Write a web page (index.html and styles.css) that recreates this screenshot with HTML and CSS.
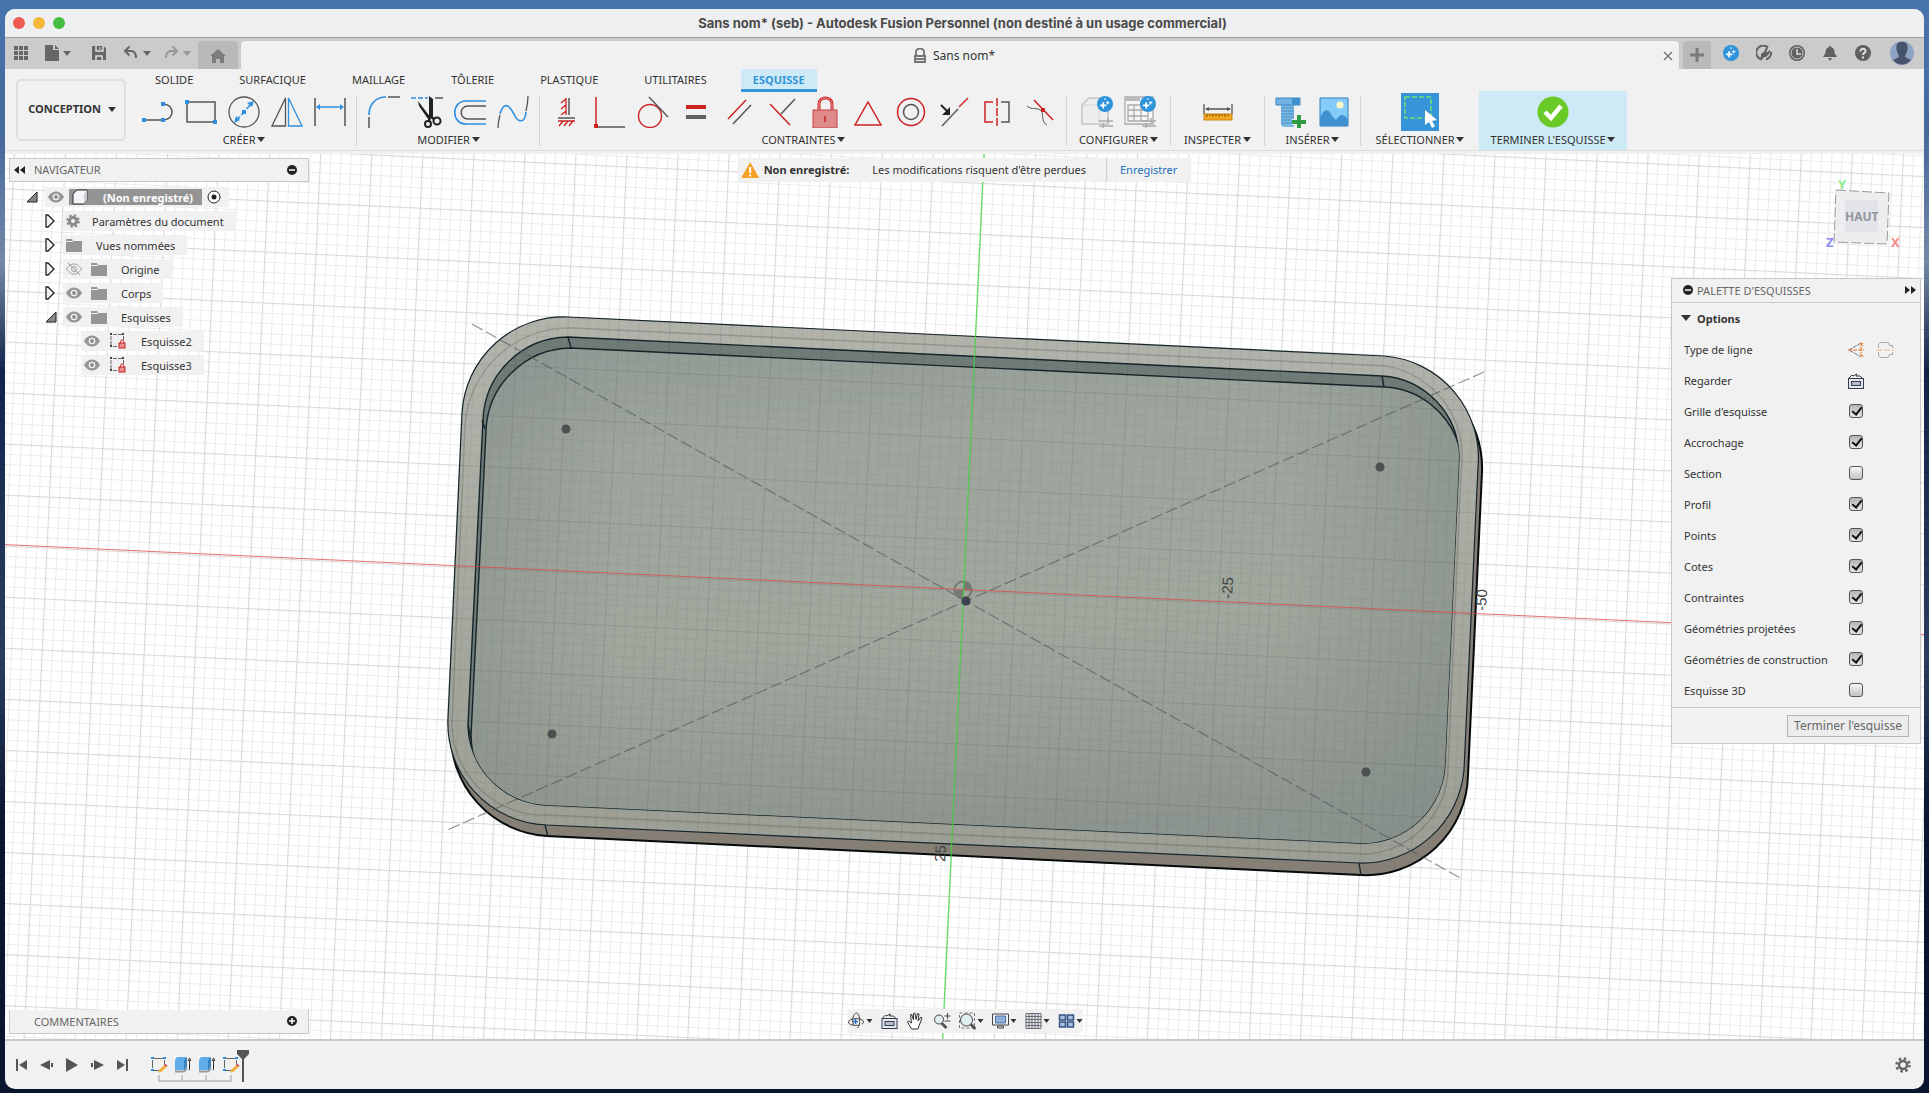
FILE: index.html
```html
<!DOCTYPE html>
<html lang="fr">
<head>
    <meta charset="UTF-8">
    <meta name="viewport" content="width=device-width, initial-scale=1.0">
    <title>Sans nom* - Autodesk Fusion</title>
    <link rel="stylesheet" href="styles.css">
</head>
<body>
    <!-- shared icons -->
    <svg class="symbols" width="0" height="0" aria-hidden="true">
        <symbol id="eye" viewBox="0 0 16 12">
            <path d="M0 6C3 1 6 .5 8 .5S13 1 16 6c-3 5-6 5.500-8 5.500S3 11 0 6z" fill="#969696"/>
            <circle cx="8" cy="6" r="3.300" fill="#f1f1f1"/>
            <circle cx="8" cy="6" r="1.900" fill="#8a8a8a"/>
        </symbol>
        <symbol id="eye-off" viewBox="0 0 16 12">
            <path d="M.5 6C4 1.500 6 1 8 1s4 .5 7.500 5c-3.500 4.500-5.500 5-7.500 5S4 10.500.5 6zM2 0l12 12" fill="none" stroke="#999"/>
            <circle cx="8" cy="6" r="2.500" fill="none" stroke="#999"/>
        </symbol>
        <symbol id="folder" viewBox="0 0 16 14">
            <path d="M0 1h6l1 2h9v11H0z" fill="#969696"/>
            <path d="M0 3.500h6.500l1-1" stroke="#f1f1f1" fill="none"/>
        </symbol>
        <symbol id="closed" viewBox="0 0 10 14">
            <path d="M1 1h2l6 6-6 6H1z" fill="#f1f1f1" stroke="#222" stroke-width="1.300"/>
        </symbol>
        <symbol id="open" viewBox="0 0 12 12">
            <path d="M11 1v10H1z" fill="#888" stroke="#222"/>
        </symbol>
        <symbol id="locked-sketch" viewBox="0 0 18 18">
            <path d="M2 4v9M4 2.500h9M14.500 4v5M4 14.500h5" fill="none" stroke="#666" stroke-dasharray="4 1"/>
            <path d="M1 1h2v2H1zM13 1h2v2h-2zM1 13h2v2H1z" fill="#444"/>
            <rect x="10" y="11" width="6" height="5" fill="#e89090" stroke="#c8201e"/>
            <path d="M11.500 11V9.500a1.500 1.500 0 0 1 3 0V11" fill="none" stroke="#c8201e"/>
        </symbol>
        <symbol id="sketch" viewBox="0 0 18 18">
            <path d="M2.500 4v8M4 2.500h9M14.500 4v5M4 14.500h5" fill="none" stroke="#666"/>
            <path d="M1 1h3v2H1zM13 1h3v2h-3zM1 13h3v2H1z" fill="#2f8fe0"/>
            <path d="M9 14l5-5 2.500 2-5 5-3 .7z" fill="#f3b13c"/>
            <path d="M14 9l1.500-1 2 2-1 1z" fill="#e43d3d"/>
        </symbol>
        <symbol id="extrude" viewBox="0 0 18 18">
            <path d="M1 15.500h9l3-3" fill="none" stroke="#999" stroke-width="2"/>
            <path d="M1 4l2-3h10v10l-3 3H1z" fill="#5face6"/>
            <path d="M10 4l3-3v10l-3 3z" fill="#3c84bd"/>
            <path d="M15.500 14V4M14 5l1.500-3L17 5" fill="none" stroke="#333"/>
        </symbol>
        <symbol id="look" viewBox="0 0 18 18">
            <rect x="1.500" y="6.500" width="15" height="10" fill="#e4e8f0" stroke="#333b4c"/>
            <rect x="4.500" y="9.500" width="9" height="4" fill="#b9bfcc" stroke="#333b4c"/>
            <path d="M2 6l3-3 1 1 4-2-1 2h4l2 2" fill="none" stroke="#333b4c"/>
        </symbol>
        <symbol id="spark" viewBox="0 0 18 18">
            <circle cx="9" cy="9" r="9" fill="#2f93dc"/>
            <path d="M7 7v7M3.500 10.500h7" stroke="#fff" stroke-width="2"/>
            <path d="M12 5.500v4M10 7.500h4M9 2.500v2" stroke="#fff" stroke-width="1.200"/>
        </symbol>
    </svg>

    <div class="window">
        <header class="titlebar">
            <div class="lights">
                <button class="light red" aria-label="Fermer"></button>
                <button class="light yellow" aria-label="Réduire"></button>
                <button class="light green" aria-label="Agrandir"></button>
            </div>
            <h1>Sans nom* (seb) - Autodesk Fusion Personnel (non destiné à un usage commercial)</h1>
        </header>

        <div class="tabbar">
            <div class="quick">
                <button aria-label="Données"><svg width="16" height="16"><path d="M1 1h4v4H1zM6 1h4v4H6zM11 1h4v4h-4zM1 6h4v4H1zM6 6h4v4H6zM11 6h4v4h-4zM1 11h4v4H1zM6 11h4v4H6zM11 11h4v4h-4z" fill="#666"/></svg></button>
                <button class="with-caret file" aria-label="Fichier"><svg width="14" height="16"><path d="M0 0h8v5h6v11H0z" fill="#666"/><path d="M10 0l4 4h-4z" fill="#666"/></svg><i class="caret"></i></button>
                <button aria-label="Enregistrer"><svg width="16" height="16"><path d="M1 1h11l3 2v12H1z" fill="#666"/><path d="M5 1v5h7V1M5 15v-4h6v4" fill="none" stroke="#ddd" stroke-width="1.500"/><path d="M9 2v3" stroke="#ddd"/></svg></button>
                <button class="with-caret undo" aria-label="Annuler"><svg width="16" height="16"><path d="M2 6h6c4 0 5 3 5 7M6.500 1.500L2 6l4.500 4.500" fill="none" stroke="#666" stroke-width="2"/></svg><i class="caret"></i></button>
                <button class="with-caret faded" aria-label="Rétablir"><svg width="16" height="16"><path d="M14 6H8c-4 0-5 3-5 7M9.500 1.500L14 6l-4.500 4.500" fill="none" stroke="#666" stroke-width="2"/></svg><i class="caret"></i></button>
            </div>
            <button class="home" aria-label="Accueil"><svg width="16" height="14"><path d="M8 0l8 7h-2v7h-4v-4H6v4H2V7H0z" fill="#7c7c7c"/></svg></button>
            <div class="doc-tab">
                <svg width="14" height="16"><path d="M3 7V4a4 3.500 0 0 1 8 0v3" fill="none" stroke="#777" stroke-width="2"/><path d="M1 7h12v8H1z" fill="#777"/><path d="M3 9.500h8M3 12.500h8" stroke="#eee"/></svg>
                <span>Sans nom*</span>
                <button class="close" aria-label="Fermer l'onglet"><svg width="10" height="10"><path d="M1 1l8 8M9 1L1 9" stroke="#777" stroke-width="1.500"/></svg></button>
            </div>
            <button class="plus" aria-label="Nouvel onglet"><svg width="14" height="14"><path d="M7 0v14M0 7h14" stroke="#7c7c7c" stroke-width="3"/></svg></button>
            <div class="account">
                <button aria-label="Nouveautés"><svg width="16" height="16"><use href="#spark"/></svg></button>
                <button aria-label="Extensions"><svg width="16" height="16"><path d="M6 14.500A7 7 0 1 1 12 2.500M15 7a7 7 0 0 1-5 7.500" fill="none" stroke="#606060" stroke-width="2"/><path d="M4 15c1-3 1-4 1-6l4-3 4 3-3 3c-2 0-4 1-4 3z" fill="#606060"/><path d="M9 7l2-4M11 9l3-3" stroke="#606060" stroke-width="2"/></svg></button>
                <button aria-label="Historique"><svg width="16" height="16"><circle cx="8" cy="8" r="8" fill="#606060"/><circle cx="8" cy="8" r="6" fill="none" stroke="#ccc"/><path d="M8 4v5h4" fill="none" stroke="#ddd" stroke-width="1.500"/></svg></button>
                <button aria-label="Notifications"><svg width="16" height="16"><path d="M8 0l1 2c3 1 3.500 3 3.500 6l2.500 4H1l2.500-4c0-3 .5-5 3.500-6zM6 13h4l-2 3z" fill="#606060"/></svg></button>
                <button aria-label="Aide"><svg width="16" height="16"><circle cx="8" cy="8" r="8" fill="#606060"/><path d="M5.500 6.500c0-4 5.500-3.500 5 0-.2 1.500-2.500 1.500-2.500 3.500M8 11.500v2" fill="none" stroke="#ddd" stroke-width="2"/></svg></button>
                <button class="avatar" aria-label="Compte"><svg width="24" height="24"><circle cx="12" cy="12" r="12" fill="#8fa3c4"/><path d="M12 1c5 0 6 3 5.500 7S15 14 15 16l6 3c-5 6-13 6-18 0l6-3c0-2-2-4-2.500-8S7 1 12 1z" fill="#46536a"/></svg></button>
            </div>
        </div>

        <div class="ribbon">
            <button class="workspace">CONCEPTION <i class="caret"></i></button>
            <div class="ribbon-main">
                <nav class="ribbon-tabs">
                    <a href="#">SOLIDE</a>
                    <a href="#">SURFACIQUE</a>
                    <a href="#">MAILLAGE</a>
                    <a href="#">TÔLERIE</a>
                    <a href="#">PLASTIQUE</a>
                    <a href="#">UTILITAIRES</a>
                    <a href="#" class="active">ESQUISSE</a>
                </nav>
                <div class="tools">
                    <section class="group">
                        <div class="icons">
                            <button aria-label="Ligne"><svg width="32" height="32"><path d="M3 24h16M21 8c12 0 12 16 0 16" fill="none" stroke="#555" stroke-width="1.500"/><path d="M0 22h4v4H0zM19 22h4v4h-4zM19 6h4v4h-4z" fill="#2f8fe0"/></svg></button>
                            <button aria-label="Rectangle"><svg width="32" height="32"><path d="M2 6h28v20H2z" fill="none" stroke="#555" stroke-width="1.500"/><path d="M0 4h4v4H0zM28 24h4v4h-4z" fill="#2f8fe0"/></svg></button>
                            <button aria-label="Cercle"><svg width="32" height="32"><circle cx="16" cy="16" r="15" fill="none" stroke="#555" stroke-width="1.300"/><path d="M8 25l16-18" stroke="#2f8fe0" stroke-width="1.500" stroke-dasharray="6 2"/><path d="M6 27l2-7 4 4zM26 5l-7 2 5 4zM14 14h4v4h-4z" fill="#2f8fe0"/></svg></button>
                            <button aria-label="Symétrie"><svg width="32" height="32"><path d="M14.500 2v28H1z" fill="none" stroke="#555" stroke-width="1.300"/><path d="M17.500 2v28H31z" fill="none" stroke="#2f8fe0" stroke-width="1.300"/></svg></button>
                            <button aria-label="Cote"><svg width="32" height="32"><path d="M1 2v28M31 2v28" stroke="#555" stroke-width="1.500"/><path d="M4 11h24" stroke="#2f8fe0" stroke-width="1.500"/><path d="M2 11l4-3v6zM30 11l-4-3v6z" fill="#2f8fe0"/></svg></button>
                        </div>
                        <h2>CRÉER <i class="caret"></i></h2>
                    </section>
                    <section class="group">
                        <div class="icons">
                            <button aria-label="Congé"><svg width="32" height="32"><path d="M1 19C1 8 8 1 18 1" fill="none" stroke="#2f8fe0" stroke-width="1.600"/><path d="M1 21v11M20 1h12" stroke="#555" stroke-width="1.500"/></svg></button>
                            <button aria-label="Ajuster"><svg width="32" height="32"><path d="M0 2h17" stroke="#2f8fe0" stroke-width="1.600" stroke-dasharray="5 2"/><path d="M24 2h8" stroke="#555" stroke-width="1.500"/><path d="M7 5l13 17-3 1L8 10zM18 0l4 3v18l-4-2z" fill="#222"/><circle cx="17" cy="28" r="3" fill="none" stroke="#222" stroke-width="2"/><circle cx="26" cy="25" r="3.500" fill="none" stroke="#222" stroke-width="2"/><path d="M18 19l5 4M19 20l-1 5" stroke="#222" stroke-width="2.500"/></svg></button>
                            <button aria-label="Décaler"><svg width="32" height="32"><path d="M32 5H12c-15 0-15 23 0 23h20" fill="none" stroke="#2f8fe0" stroke-width="1.700"/><path d="M32 10H14c-9 0-9 13 0 13h18" fill="none" stroke="#555" stroke-width="1.500"/></svg></button>
                            <button aria-label="Spline"><svg width="32" height="32"><path d="M3 18C8 1 15 14 18 20s10 8 11-4" fill="none" stroke="#2f8fe0" stroke-width="1.600"/><path d="M1 32c0-6 1-9 2-13M29 15c1-4 2-8 2-15" fill="none" stroke="#555" stroke-width="1.300"/></svg></button>
                        </div>
                        <h2>MODIFIER <i class="caret"></i></h2>
                    </section>
                    <section class="group">
                        <div class="icons">
                            <button aria-label="Horizontal/Vertical"><svg width="32" height="32"><path d="M18 2v17M7 22h17" stroke="#555" stroke-width="1.500"/><path d="M15 2v17M15 3l-5 4M15 9l-5 4M15 15l-5 4M7 25h17M12 25l-4 5M17 25l-4 5M22 25l-4 5" stroke="#cb2222" stroke-width="1.300"/></svg></button>
                            <button aria-label="Perpendiculaire"><svg width="32" height="32"><path d="M3 31h28" stroke="#555" stroke-width="1.500"/><path d="M2 1v28" stroke="#cb2222" stroke-width="1.500"/><path d="M0 28h4v4H0z" fill="#cb2222"/></svg></button>
                            <button aria-label="Tangent"><svg width="32" height="32"><circle cx="13" cy="20" r="11.500" fill="none" stroke="#cb2222" stroke-width="1.400"/><path d="M12 1l19 20" stroke="#555" stroke-width="1.400"/></svg></button>
                            <button aria-label="Égal"><svg width="32" height="32"><path d="M6 9h20v4H6z" fill="#cb2222"/><path d="M6 19h20v4H6z" fill="#606060"/></svg></button>
                            <button aria-label="Parallèle"><svg width="32" height="32"><path d="M5 23L23 4" stroke="#cb2222" stroke-width="1.500"/><path d="M10 28L28 9" stroke="#555" stroke-width="1.500"/></svg></button>
                            <button aria-label="Coïncident"><svg width="32" height="32"><path d="M4 8l20 21" stroke="#cb2222" stroke-width="1.500"/><path d="M15 18L29 3" stroke="#555" stroke-width="1.500"/></svg></button>
                            <button aria-label="Verrouiller"><svg width="32" height="32"><rect x="4" y="14" width="24" height="18" fill="#df8b8b" stroke="#c84040"/><path d="M10 14V8c0-8 13-8 13 0v6" fill="none" stroke="#cb2222" stroke-width="3"/><path d="M10 14V8c0-8 13-8 13 0v6" fill="none" stroke="#e9a0a0"/><path d="M16 20v6" stroke="#cb2222" stroke-width="1.500"/></svg></button>
                            <button aria-label="Milieu"><svg width="32" height="32"><path d="M16 6l13 23H3z" fill="none" stroke="#cb2222" stroke-width="1.500"/></svg></button>
                            <button aria-label="Concentrique"><svg width="32" height="32"><circle cx="16" cy="16" r="13.500" fill="none" stroke="#cb2222" stroke-width="1.500"/><circle cx="16" cy="16" r="7.500" fill="none" stroke="#555" stroke-width="1.500"/></svg></button>
                            <button aria-label="Colinéaire"><svg width="32" height="32"><path d="M4 30l16-17" stroke="#555" stroke-width="1.400"/><path d="M21 11l9-9" stroke="#cb2222" stroke-width="1.500"/><path d="M3 9l6 6" stroke="#222" stroke-width="2"/><path d="M12 11v8H4z" fill="#222"/></svg></button>
                            <button aria-label="Symétrique"><svg width="32" height="32"><path d="M16 2v28" stroke="#cb2222" stroke-width="1.500" stroke-dasharray="8 2"/><path d="M12 6H4v20h8" fill="none" stroke="#cb2222" stroke-width="1.500"/><path d="M20 6h8v20h-8" fill="none" stroke="#555" stroke-width="1.500"/></svg></button>
                            <button aria-label="Courbure"><svg width="32" height="32"><path d="M10 4l19 20" stroke="#cb2222" stroke-width="1.500"/><path d="M3 10c6 5 7 0 15 5 1 6 0 12 5 14" fill="none" stroke="#555"/><path d="M17 12h4v4h-4z" fill="#cb2222"/></svg></button>
                        </div>
                        <h2>CONTRAINTES <i class="caret"></i></h2>
                    </section>
                    <section class="group configure">
                        <div class="icons">
                            <button aria-label="Configurer"><svg width="32" height="32"><path d="M1 9l7-7h15l4 4v22H1z" fill="#eee" stroke="#c4c4c4" stroke-width="1.500"/><path d="M1 9h17v19" fill="none" stroke="#d4d4d4"/><path d="M18 25h14M18 30h14M27 22v5M22 27v5" stroke="#aaa" stroke-width="1.500"/><svg x="16" y="0" width="16" height="16"><use href="#spark"/></svg></svg></button>
                            <button aria-label="Table de configuration"><svg width="32" height="32"><path d="M1 1h28v27H1zM4 9h20v16H4zM4 14h20M4 20h20M10 9v16M17 9v16" fill="#f6f6f6" stroke="#aaa" stroke-width="1.300"/><path d="M2 2h14v3H2z" fill="#bbb"/><path d="M18 25h14M18 30h14M27 22v5M22 27v5" stroke="#aaa" stroke-width="1.500"/><svg x="16" y="0" width="16" height="16"><use href="#spark"/></svg></svg></button>
                        </div>
                        <h2>CONFIGURER <i class="caret"></i></h2>
                    </section>
                    <section class="group inspect">
                        <div class="icons">
                            <button aria-label="Mesurer"><svg width="32" height="32"><path d="M2 8v10M30 8v10M4 13h24" stroke="#555" stroke-width="1.300"/><path d="M3 13l4-2v4zM29 13l-4-2v4z" fill="#555"/><path d="M2 18h28v6H2z" fill="#f5a623" stroke="#c98314"/><path d="M5 18v3M8 18v2M11 18v3M14 18v2M17 18v3M20 18v2M23 18v3M26 18v2" stroke="#7a4d00"/></svg></button>
                        </div>
                        <h2>INSPECTER <i class="caret"></i></h2>
                    </section>
                    <section class="group insert">
                        <div class="icons">
                            <button aria-label="Insérer une fixation"><svg width="32" height="32"><path d="M6 9h13v22H8l-2-2z" fill="#7ab8e4"/><path d="M6 12h13M6 15h13M6 18h13M6 21h13M6 24h13M6 27h13" stroke="#4b92c6"/><path d="M1 2h24v7H1z" fill="#6fb3e6" stroke="#3c84bd"/><path d="M17 2h7v7h-7z" fill="#3f91cf"/><path d="M24 18v14M17 26h14" stroke="#f1f1f1" stroke-width="6"/><path d="M24 19v13M17 26h14" stroke="#2f9c43" stroke-width="4"/></svg></button>
                            <button aria-label="Insérer une image"><svg width="32" height="32"><path d="M2 2h28v28H2z" fill="#84cbf8" stroke="#2f7fc0"/><path d="M2 22c5-11 9-9 12-2l4 4c5-9 9-4 12-1v7H2z" fill="#3f91cf"/><circle cx="22" cy="9" r="3.500" fill="#fdf6c4"/></svg></button>
                        </div>
                        <h2>INSÉRER <i class="caret"></i></h2>
                    </section>
                    <section class="group select">
                        <div class="icons">
                            <button aria-label="Sélectionner"><svg class="big" width="38" height="38"><path d="M0 0h38v38H0z" fill="#3595d8"/><path d="M4 4h26v21H4z" fill="none" stroke="#6fe07a" stroke-width="1.500" stroke-dasharray="5 2"/><path d="M24 17v15l4-3 3 6 3-2-3-5 5-1z" fill="#fff"/></svg></button>
                        </div>
                        <h2>SÉLECTIONNER <i class="caret"></i></h2>
                    </section>
                    <button class="finish">
                        <svg width="32" height="32"><circle cx="16" cy="16" r="15.500" fill="#69ca27"/><path d="M8 16l6 6 10-12" fill="none" stroke="#fff" stroke-width="4.500"/></svg>
                        <span>TERMINER L'ESQUISSE <i class="caret"></i></span>
                    </button>
                </div>
            </div>
        </div>

        <main class="canvas">
            <svg class="scene" viewBox="5 154 1919 885" preserveAspectRatio="xMidYMid slice">
                <defs>
                    <pattern id="minor" width="10.200" height="10.200" patternUnits="userSpaceOnUse" patternTransform="translate(963.500 590.500) rotate(2.680)">
                        <path d="M0 0H10.200M0 0V10.200" stroke="#000" stroke-opacity=".08" stroke-width="2"/>
                    </pattern>
                    <pattern id="major" width="51" height="51" patternUnits="userSpaceOnUse" patternTransform="translate(963.500 590.500) rotate(2.680)">
                        <path d="M0 0H51M0 0V51" stroke="#000" stroke-opacity=".08" stroke-width="2.400"/>
                    </pattern>
                    <linearGradient id="rimFill" x1="0" y1="0" x2="0" y2="1">
                        <stop offset="0" stop-color="#b2b4ac"/>
                        <stop offset="1" stop-color="#9c9f95"/>
                    </linearGradient>
                    <linearGradient id="floorFill" x1="0" y1="0" x2=".12" y2="1">
                        <stop offset="0" stop-color="#929b96"/>
                        <stop offset=".22" stop-color="#9ea69d"/>
                        <stop offset=".6" stop-color="#a0a79d"/>
                        <stop offset=".8" stop-color="#989f96"/>
                        <stop offset="1" stop-color="#8d958f"/>
                    </linearGradient>
                    <linearGradient id="floorSides">
                        <stop offset="0" stop-color="#7f8a86" stop-opacity=".4"/>
                        <stop offset=".15" stop-color="#7f8a86" stop-opacity="0"/>
                        <stop offset=".82" stop-color="#7f8a86" stop-opacity="0"/>
                        <stop offset="1" stop-color="#7f8a86" stop-opacity=".5"/>
                    </linearGradient>
                    <path id="opening" d="M568 337L1382 376A82 82 0 0 1 1459 457L1445 762A82 82 0 0 1 1359 843L546 805A82 82 0 0 1 468 725L483 420A86 86 0 0 1 568 337z"/>
                    <path id="rim" d="M569 317L1384 356A102 102 0 0 1 1478 467L1464 770A102 102 0 0 1 1359 863L546 825A102 102 0 0 1 448 718L462 413A102 102 0 0 1 569 317z"/>
                    <clipPath id="openingClip"><use href="#opening"/></clipPath>
                    <clipPath id="rimClip"><use href="#rim"/></clipPath>
                </defs>
                <path d="M5 154h1919v885H5z" fill="#fff"/>
                <path d="M5 154h1919v885H5z" fill="url(#minor)"/>
                <path d="M5 154h1919v885H5z" fill="url(#major)"/>

                <!-- tray -->
                <path d="M569 330L1386 366A102 102 0 0 1 1482 472L1468 775A102 102 0 0 1 1361 875L547 836A102 102 0 0 1 451 730L466 430z" fill="#857f75" stroke="#050a0c" stroke-width="2"/>
                <use href="#rim" fill="url(#rimFill)" stroke="#16262c" stroke-width="1.200"/>
                <use href="#opening" fill="#717c79" stroke="#16262c" stroke-width="1.400"/>
                <g clip-path="url(#openingClip)">
                    <use href="#opening" transform="translate(3 11)" fill="url(#floorFill)"/>
                    <use href="#opening" transform="translate(3 11)" fill="url(#floorSides)" stroke="#16262c" stroke-width="1.400"/>
                </g>
                <path d="M568 337l3 11M1382 376l2 11M545 825l3 12M1359 863l2 12M482 420l3 9M468 725l3 14" stroke="#16262c" stroke-width="1.400"/>
                <path d="M571 328L1386 366A92 92 0 0 1 1461 472L1448 770A88 88 0 0 1 1366 854L549 815A92 92 0 0 1 452 724L465 425A104 104 0 0 1 571 328z" fill="none" stroke="#000" stroke-opacity=".15" stroke-width="1.500"/>
                <g clip-path="url(#rimClip)" opacity=".6">
                    <path d="M5 154h1919v885H5z" fill="url(#minor)"/>
                    <path d="M5 154h1919v885H5z" fill="url(#major)"/>
                </g>

                <!-- sketch geometry and axes -->
                <path d="M472 324L966 601L1462 879M1484 372L966 601L445 831" fill="none" stroke="#4a5252" stroke-opacity=".6" stroke-width="1.200" stroke-dasharray="12 4"/>
                <circle cx="963" cy="590" r="8.500" fill="none" stroke="#767a72" stroke-width="2"/>
                <path d="M963 590v-8.500a8.500 8.500 0 0 1 8.500 8.500zM963 590v8.500a8.500 8.500 0 0 1-8.500-8.500z" fill="#767a72"/>
                <path d="M5 544.600L1924 634.500" stroke="#d44" stroke-opacity=".75"/>
                <path d="M984 154L942.500 1039" stroke="#3ddc3d" stroke-opacity=".8" stroke-width="1.200"/>
                <g fill="#4a5150">
                    <circle cx="566" cy="429" r="4.500"/>
                    <circle cx="1380" cy="467" r="4.500"/>
                    <circle cx="552" cy="734" r="4.500"/>
                    <circle cx="1366" cy="772" r="4.500"/>
                    <circle cx="966" cy="601" r="4.500" fill="#3c4250"/>
                </g>
                <g class="ticks">
                    <text transform="translate(1232 599) rotate(-87)">-25</text>
                    <text transform="translate(1486 611) rotate(-87)">-50</text>
                    <text transform="translate(945 862) rotate(-87)">25</text>
                </g>
            </svg>

            <section class="browser">
                <header class="panel-head">
                    <svg width="11" height="8"><path d="M5 0v8L0 4zM11 0v8L6 4z" fill="#222"/></svg>
                    <h2>NAVIGATEUR</h2>
                    <button aria-label="Masquer"><svg width="10" height="10"><circle cx="5" cy="5" r="5" fill="#222"/><path d="M2 5h6" stroke="#fff" stroke-width="1.500"/></svg></button>
                </header>
                <ul class="tree">
                    <li class="root">
                        <svg width="12" height="12"><use href="#open"/></svg>
                        <div class="node">
                            <svg width="16" height="12"><use href="#eye"/></svg>
                            <span class="selected">
                                <svg width="18" height="16"><path d="M2 5l4-4h10v10l-3 4H2z" fill="#f4f5f8" stroke="#333"/><path d="M13 5l3-4v10l-3 4z" fill="#c9ccd6"/></svg>
                                (Non enregistré)
                            </span>
                            <svg width="14" height="14"><circle cx="7" cy="7" r="6" fill="#fff" stroke="#222"/><circle cx="7" cy="7" r="2.500" fill="#222"/></svg>
                        </div>
                    </li>
                    <li>
                        <svg width="10" height="14"><use href="#closed"/></svg>
                        <div class="node params">
                            <svg width="14" height="14"><circle cx="7" cy="7" r="3.500" fill="none" stroke="#8c8c8c" stroke-width="3"/><circle cx="7" cy="7" r="5.500" fill="none" stroke="#8c8c8c" stroke-width="2.500" stroke-dasharray="2.300 2.020"/></svg>
                            Paramètres du document
                        </div>
                    </li>
                    <li>
                        <svg width="10" height="14"><use href="#closed"/></svg>
                        <div class="node views"><svg width="16" height="14"><use href="#folder"/></svg>Vues nommées</div>
                    </li>
                    <li>
                        <svg width="10" height="14"><use href="#closed"/></svg>
                        <div class="node"><svg width="16" height="12"><use href="#eye-off"/></svg><svg width="16" height="14"><use href="#folder"/></svg><span>Origine</span></div>
                    </li>
                    <li>
                        <svg width="10" height="14"><use href="#closed"/></svg>
                        <div class="node"><svg width="16" height="12"><use href="#eye"/></svg><svg width="16" height="14"><use href="#folder"/></svg><span>Corps</span></div>
                    </li>
                    <li class="expanded">
                        <svg width="12" height="12"><use href="#open"/></svg>
                        <div class="node"><svg width="16" height="12"><use href="#eye"/></svg><svg width="16" height="14"><use href="#folder"/></svg><span>Esquisses</span></div>
                    </li>
                    <li class="leaf">
                        <div class="node"><svg width="16" height="12"><use href="#eye"/></svg><svg width="18" height="18"><use href="#locked-sketch"/></svg><span>Esquisse2</span></div>
                    </li>
                    <li class="leaf">
                        <div class="node"><svg width="16" height="12"><use href="#eye"/></svg><svg width="18" height="18"><use href="#locked-sketch"/></svg><span>Esquisse3</span></div>
                    </li>
                </ul>
            </section>

            <div class="notice">
                <svg width="18" height="16"><path d="M9 0l9 16H0z" fill="#f5a027"/><path d="M9 5v6M9 12.500v2" stroke="#fff" stroke-width="2"/></svg>
                <strong>Non enregistré:</strong>
                <span>Les modifications risquent d'être perdues</span>
                <a href="#">Enregistrer</a>
            </div>

            <svg class="viewcube" width="84" height="85">
                <path d="M16 20l53 3-2 51-53-2z" fill="#ececee" fill-opacity=".9" stroke="#9a9a9a" stroke-dasharray="10 3"/>
                <path d="M25 30h33v32H25z" fill="#e2e4ea"/>
                <text class="face" x="25" y="51">HAUT</text>
                <text x="18" y="19" fill="#8cee8c">Y</text>
                <text x="6" y="77" fill="#8a8af5">Z</text>
                <text x="71" y="77" fill="#f38c8c">X</text>
            </svg>

            <section class="palette">
                <header class="panel-head">
                    <svg width="10" height="10"><circle cx="5" cy="5" r="5" fill="#222"/><path d="M2 5h6" stroke="#fff" stroke-width="1.500"/></svg>
                    <h2>PALETTE D'ESQUISSES</h2>
                    <button aria-label="Ancrer"><svg width="11" height="8"><path d="M0 0v8l5-4zM6 0v8l5-4z" fill="#222"/></svg></button>
                </header>
                <h3><i class="caret"></i>Options</h3>
                <div class="option">
                    <span>Type de ligne</span>
                    <button aria-label="Construction"><svg width="18" height="16"><path d="M14 1L2 8l12 7" fill="none" stroke="#777" stroke-dasharray="4 1"/><path d="M1 8h16M13 1l3 3M16 1l-4 3M13 12l4 3M14 5v6" stroke="#e8752a" stroke-width="1.200" stroke-dasharray="4 1"/></svg></button>
                    <button class="second" aria-label="Axe"><svg width="18" height="16"><path d="M2.500 6V3l2-2.500h8l1 3h3V6M2.500 10v3l2 2.500h8l1-3h3V10" fill="none" stroke="#aaa"/><path d="M0 8h18" stroke="#f3b48e" stroke-dasharray="6 2"/></svg></button>
                </div>
                <div class="option">
                    <span>Regarder</span>
                    <button aria-label="Regarder"><svg width="18" height="18"><use href="#look"/></svg></button>
                </div>
                <div class="option"><label for="grid">Grille d'esquisse</label><input type="checkbox" id="grid" checked></div>
                <div class="option"><label for="snap">Accrochage</label><input type="checkbox" id="snap" checked></div>
                <div class="option"><label for="slice">Section</label><input type="checkbox" id="slice"></div>
                <div class="option"><label for="profile">Profil</label><input type="checkbox" id="profile" checked></div>
                <div class="option"><label for="points">Points</label><input type="checkbox" id="points" checked></div>
                <div class="option"><label for="dims">Cotes</label><input type="checkbox" id="dims" checked></div>
                <div class="option"><label for="constraints">Contraintes</label><input type="checkbox" id="constraints" checked></div>
                <div class="option"><label for="projected">Géométries projetées</label><input type="checkbox" id="projected" checked></div>
                <div class="option"><label for="construction">Géométries de construction</label><input type="checkbox" id="construction" checked></div>
                <div class="option"><label for="sketch3d">Esquisse 3D</label><input type="checkbox" id="sketch3d"></div>
                <footer><button>Terminer l'esquisse</button></footer>
            </section>

            <section class="comments panel-head">
                <h2>COMMENTAIRES</h2>
                <button aria-label="Ajouter"><svg width="10" height="10"><circle cx="5" cy="5" r="5" fill="#222"/><path d="M2 5h6M5 2v6" stroke="#fff" stroke-width="1.500"/></svg></button>
            </section>

            <div class="navbar">
                <button aria-label="Orbite"><svg width="18" height="18"><path d="M12 13c-5 1-11 0-11-3 0-4 15-5 15 0 0 1-1 2-2 2" fill="none" stroke="#444"/><path d="M6 13c-2-5 0-12 3-12s5 11 1 15" fill="none" stroke="#444"/><path d="M8 7v5M5.500 9.500h5" stroke="#2f6fd0" stroke-width="1.500"/></svg><i class="caret"></i></button>
                <button aria-label="Regarder"><svg width="18" height="18"><use href="#look"/></svg></button>
                <button aria-label="Panoramique"><svg width="18" height="18"><path d="M5 17L1 10l1-1 3 2-1-8 1-1 2 6V1.500L8.500 1l1 6.500 1.500-6 1.500.5-1 7 3-4 1 1-3 8-1 3z" fill="#fff" stroke="#333"/></svg></button>
                <button aria-label="Zoom"><svg width="18" height="18"><path d="M9 11l5 5" stroke="#555" stroke-width="3"/><circle cx="6.500" cy="7.500" r="4.500" fill="#dfeeee" stroke="#444"/><path d="M12 4h6M15 1v6M12 9h6" stroke="#444"/></svg></button>
                <button aria-label="Zoom fenêtre"><svg width="18" height="18"><path d="M1 1h15v15H1z" fill="none" stroke="#777" stroke-dasharray="3 2"/><path d="M12 12l5 5" stroke="#555" stroke-width="3"/><circle cx="8" cy="8" r="6" fill="#dfeeee" stroke="#444"/></svg><i class="caret"></i></button>
                <button aria-label="Affichage"><svg width="18" height="18"><path d="M1 2h16v11H1z" fill="#f4f4f4" stroke="#444"/><path d="M4 4h10v7H4z" fill="#8fb2dd" stroke="#4d6f9e"/><path d="M6 14h6v2H6z" fill="#eee" stroke="#444"/></svg><i class="caret"></i></button>
                <button aria-label="Grille"><svg width="18" height="18"><path d="M1.500 1.500h15v15h-15zM4.500 1v16M7.500 1v16M10.500 1v16M13.500 1v16M1 4.500h16M1 7.500h16M1 10.500h16M1 13.500h16" fill="#e8e8ea" stroke="#6a6e78"/></svg><i class="caret"></i></button>
                <button aria-label="Vues"><svg width="18" height="18"><path d="M2 3h6v5H2zM10 3h6v5h-6zM2 10h6v5H2zM10 10h6v5h-6z" fill="#a9c0e4" stroke="#34507f" stroke-width="1.500"/></svg><i class="caret"></i></button>
            </div>
        </main>

        <footer class="timeline">
            <button aria-label="Début"><svg width="14" height="14"><path d="M2 1v12" stroke="#555" stroke-width="2"/><path d="M12 2v10L4 7z" fill="#555"/></svg></button>
            <button aria-label="Précédent"><svg width="14" height="14"><path d="M10 2v10L0 7z" fill="#555"/><path d="M12 5v4" stroke="#555" stroke-width="2"/></svg></button>
            <button aria-label="Lecture"><svg width="14" height="14"><path d="M1 0v14l12-7z" fill="#555"/></svg></button>
            <button aria-label="Suivant"><svg width="14" height="14"><path d="M4 2v10l10-5z" fill="#555"/><path d="M2 5v4" stroke="#555" stroke-width="2"/></svg></button>
            <button aria-label="Fin"><svg width="14" height="14"><path d="M12 1v12" stroke="#555" stroke-width="2"/><path d="M2 2v10l8-5z" fill="#555"/></svg></button>
            <div class="features">
                <svg width="18" height="18"><use href="#sketch"/></svg>
                <svg width="18" height="18"><use href="#extrude"/></svg>
                <svg width="18" height="18"><use href="#extrude"/></svg>
                <svg width="18" height="18"><use href="#sketch"/></svg>
                <svg class="bracket" width="74" height="8"><path d="M1 0v6h72V0M24 6V0M48 6V0" fill="none" stroke="#c6c6c6" stroke-width="2"/></svg>
                <svg class="marker" width="12" height="32"><path d="M0 0h12v4L7 9v23H5V9L0 4z" fill="#555"/></svg>
            </div>
            <button class="settings" aria-label="Réglages"><svg width="16" height="16"><circle cx="8" cy="8" r="4" fill="none" stroke="#666" stroke-width="2.500"/><circle cx="8" cy="8" r="6.500" fill="none" stroke="#666" stroke-width="2.500" stroke-dasharray="2.500 2.600"/></svg></button>
        </footer>
    </div>
</body>
</html>
```

FILE: styles.css
```css
* {
    box-sizing: border-box;
}
body {
    margin: 0;
    height: 100vh;
    padding: 9px 5px 4px;
    background: linear-gradient(#4874ae 0%, #45699c 12%, #7488a8 24%, #12244a 34%, #2a3d60 60%, #0a1630 75%);
    font-family: "Noto Sans", "Open Sans", sans-serif;
    font-size: 11px;
    color: #333;
}
h1, h2, h3, ul {
    margin: 0;
    padding: 0;
    font-size: 11px;
    font-weight: normal;
}
button {
    padding: 0;
    border: none;
    background: none;
    font: inherit;
    color: inherit;
    cursor: pointer;
}
svg {
    display: block;
    flex: none;
}
a {
    color: inherit;
    text-decoration: none;
}
.symbols {
    position: absolute;
}
.caret {
    display: inline-block;
    border: 4px solid transparent;
    border-top: 5px solid #333;
    border-bottom: 0;
}
.window {
    display: flex;
    flex-direction: column;
    height: 100%;
    border-radius: 10px;
    overflow: hidden;
    background: #f1f1f1;
}

/* title bar */
.titlebar {
    display: flex;
    align-items: center;
    height: 29px;
    background: #eeeff1;
    border-bottom: 1px solid #a0a0a0;
}
.lights {
    display: flex;
    gap: 8px;
    width: 60px;
    padding-left: 8px;
}
.light {
    width: 12px;
    height: 12px;
    border-radius: 50%;
}
.red { background: #ee5b50; }
.yellow { background: #f5b73a; }
.green { background: #47bd40; }
.titlebar h1 {
    flex: 1;
    margin-right: 64px;
    text-align: center;
    font-family: Inter, sans-serif;
    font-size: 13px;
    font-weight: 700;
    color: #4a4a4a;
}

/* quick access and document tabs */
.tabbar {
    display: flex;
    height: 31px;
    padding-top: 3px;
    background: #cbcbcb;
}
.quick {
    display: flex;
    align-items: center;
    gap: 16px;
    width: 193px;
    padding: 0 0 4px 8px;
}
.with-caret {
    display: flex;
    align-items: center;
    gap: 4px;
}
.quick .file {
    margin-right: 4px;
}
.quick .undo {
    margin-right: -4px;
}
.quick .caret {
    border-top-color: #666;
}
.faded {
    opacity: .5;
}
.home {
    display: flex;
    align-items: center;
    justify-content: center;
    width: 40px;
    padding-top: 2px;
    margin-right: 3px;
    border-radius: 4px 4px 0 0;
    background: #b9b9b9;
}
.doc-tab {
    flex: 1;
    display: flex;
    align-items: center;
    justify-content: center;
    gap: 6px;
    padding-top: 1px;
    border-radius: 4px 4px 0 0;
    background: #f1f1f1;
    font-size: 12px;
}
.doc-tab span {
    margin-right: -10px;
}
.doc-tab svg:first-child {
    margin-left: auto;
}
.close {
    margin-left: auto;
    margin-right: 6px;
}
.plus {
    display: flex;
    align-items: center;
    justify-content: center;
    width: 28px;
    margin-left: 4px;
    border-radius: 4px 4px 0 0;
    background: #b9b9b9;
}
.account {
    display: flex;
    align-items: center;
    gap: 17px;
    padding: 0 10px 4px 12px;
}
.avatar {
    margin-left: 2px;
}

/* ribbon */
.ribbon {
    display: flex;
    height: 85px;
    box-shadow: inset 0 -3px #f1f1f1, inset 0 -4px #dcdcdc;
}
.workspace {
    width: 110px;
    height: 62px;
    margin: 10px 6px 0 11px;
    padding: 0 0 3px 2px;
    border: 2px solid #dfdfdf;
    border-radius: 5px;
    font-weight: bold;
}
.workspace .caret {
    margin-left: 4px;
    vertical-align: 1px;
}
.ribbon-main {
    flex: 1;
    min-width: 0;
}
.ribbon-tabs {
    display: flex;
    gap: 22px;
    padding-left: 11px;
}
.ribbon-tabs a {
    height: 23px;
    padding: 0 12px;
    line-height: 21px;
}
.ribbon-tabs .active {
    background: #cdeaf6;
    border-bottom: 3px solid #3595d8;
    color: #3595d8;
    font-weight: bold;
}
.tools {
    display: flex;
}
.group {
    height: 50px;
    margin-top: 4px;
    padding: 0 10px;
    border-right: 1px solid #d6d6d6;
}
.group + .group {
    padding-left: 11px;
}
.group.configure, .group.inspect, .group.insert, .group.select {
    padding: 0;
}
.configure { width: 104px; }
.inspect { width: 94px; }
.insert { width: 96px; }
.group.select {
    width: 118px;
    border: none;
}
.icons {
    display: flex;
    justify-content: center;
    gap: 11px;
}
.big {
    margin: -3px 0;
}
.group h2, .finish span {
    margin-top: 4px;
    line-height: 16px;
    text-align: center;
    white-space: nowrap;
}
.group .caret, .finish .caret {
    margin-left: -1px;
    vertical-align: 2px;
}
.finish {
    display: flex;
    flex-direction: column;
    align-items: center;
    width: 148px;
    height: 59px;
    margin-top: -1px;
    padding-top: 5px;
    background: #cdeaf6;
}

/* modelling area */
.canvas {
    position: relative;
    flex: 1;
    min-height: 0;
    border-bottom: 2px solid #c8c8c8;
}
.scene {
    width: 100%;
    height: 100%;
}
.ticks {
    font-family: "Liberation Sans", sans-serif;
    font-size: 15px;
    fill: #444;
}
.panel-head {
    display: flex;
    align-items: center;
    height: 24px;
    background: #f1f1f1;
    color: #666;
}
.panel-head h2 {
    flex: 1;
}
.browser {
    position: absolute;
    top: 4px;
    left: 4px;
    width: 300px;
}
.browser .panel-head, .comments {
    border: 1px solid #c8c8c8;
    padding: 0 11px 1px 4px;
}
.browser .panel-head h2 {
    margin-left: 9px;
}
.comments {
    position: absolute;
    left: 4px;
    bottom: 5px;
    width: 300px;
    border-top: none;
}
.comments h2 {
    margin-left: 20px;
}

/* object tree */
.tree {
    padding-top: 4px;
    list-style: none;
}
.tree li {
    display: flex;
    align-items: center;
    gap: 8px;
    height: 24px;
    padding: 0 0 2px 36px;
}
.tree .root {
    gap: 7px;
    padding-left: 17px;
}
.tree .expanded {
    gap: 6px;
}
.tree .leaf {
    padding-left: 72px;
}
.node {
    display: flex;
    align-items: center;
    gap: 9px;
    height: 20px;
    padding: 0 12px 0 3px;
    background: #f1f1f1;
}
.node span:last-child {
    margin-left: 5px;
}
.node.params {
    gap: 12px;
}
.node.views {
    gap: 14px;
}
.root .node {
    gap: 5px;
    padding-right: 8px;
}
.selected {
    display: flex;
    align-items: center;
    gap: 14px;
    height: 16px;
    padding: 0 9px 0 2px;
    background: #949494;
    color: #fff;
    font-weight: bold;
}

/* unsaved notice */
.notice {
    position: absolute;
    top: 4px;
    left: 50%;
    transform: translateX(-50%);
    display: flex;
    align-items: center;
    height: 24px;
    padding: 0 14px 1px 3px;
    background: #f1f1f1;
    white-space: nowrap;
}
.notice strong {
    margin: 0 23px 0 5px;
}
.notice a {
    margin-left: 20px;
    padding-left: 13px;
    border-left: 1px solid #ccc;
    color: #1c6fb8;
    line-height: 24px;
}
.viewcube {
    position: absolute;
    top: 16px;
    right: 20px;
    font-weight: bold;
    font-size: 13px;
}
.face {
    font-size: 12px;
    fill: #92959c;
}

/* sketch palette */
.palette {
    position: absolute;
    top: 124px;
    right: 3px;
    width: 250px;
    border: 1px solid #c8c8c8;
    background: #f1f1f1;
}
.palette .panel-head {
    gap: 4px;
    padding: 0 4px 1px 11px;
    border-bottom: 1px solid #c8c8c8;
}
.palette h3 {
    display: flex;
    align-items: center;
    gap: 6px;
    height: 32px;
    padding: 0 0 2px 9px;
    font-weight: bold;
}
.palette h3 .caret {
    border-width: 6px 5px 0;
}
.option {
    display: flex;
    align-items: center;
    height: 31px;
    padding: 0 0 2px 12px;
}
.option label, .option span {
    width: 163px;
    white-space: nowrap;
}
.option .second {
    margin-left: 11px;
}
.option input {
    appearance: none;
    width: 14px;
    height: 14px;
    margin: 0 0 2px 2px;
    border: 1px solid #555;
    border-radius: 3px;
    background: linear-gradient(#f8f8f8, #c2c2c2);
}
.option input:checked {
    background: linear-gradient(#b4b4b4, #e6e6e6);
}
.option input:checked::after {
    content: "";
    display: block;
    width: 4px;
    height: 8px;
    margin: 0 0 0 4px;
    border: solid #111;
    border-width: 0 2px 2px 0;
    transform: rotate(38deg);
}
.palette footer {
    display: flex;
    justify-content: flex-end;
    padding: 7px 11px 6px;
    border-top: 1px solid #c8c8c8;
}
.palette footer button {
    width: 122px;
    height: 22px;
    padding-bottom: 1px;
    border: 1px solid #b4b4b4;
    background: #ececec;
    color: #666;
    font-size: 12px;
}

/* view controls */
.navbar {
    position: absolute;
    bottom: 6px;
    left: 50%;
    transform: translateX(-50%);
    display: flex;
    align-items: center;
    gap: 8px;
    height: 24px;
    background: #f1f1f1;
}
.navbar button {
    display: flex;
    align-items: center;
    gap: 1px;
}
.navbar .caret {
    border-width: 4px 3px 0;
}

/* timeline */
.timeline {
    display: flex;
    align-items: center;
    gap: 11px;
    height: 48px;
    padding: 0 13px 0 10px;
}
.features {
    position: relative;
    display: flex;
    gap: 6px;
    margin-left: 10px;
}
.bracket {
    position: absolute;
    top: 19px;
    left: 8px;
}
.marker {
    position: absolute;
    top: -6px;
    left: 87px;
}
.settings {
    margin-left: auto;
}
```
